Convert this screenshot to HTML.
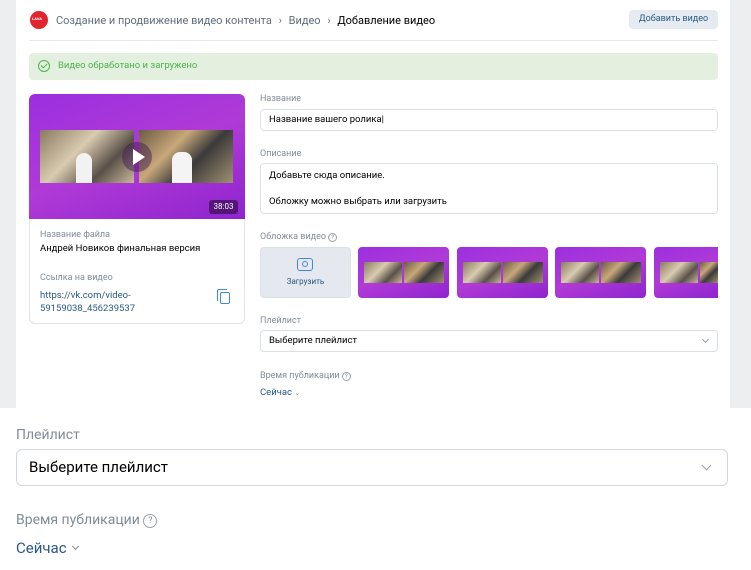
<!DOCTYPE html>
<html><head><meta charset="utf-8"><style>
*{box-sizing:border-box;margin:0;padding:0}
body{width:751px;height:570px;overflow:hidden;background:#fff;font-family:"Roboto","Liberation Sans",sans-serif;position:relative;color:#000}
.a{position:absolute}
.top{left:0;top:0;width:751px;height:408px;background:#edeef0}
.card{left:16px;top:0;width:714px;height:408px;background:#fff;border-radius:0 0 0 0}
.lbl{font-size:9px;color:#818c99}
.inp{border:1px solid #dce1e6;border-radius:4px;background:#fff;font-size:9.5px;color:#000}
.frame{background:linear-gradient(135deg,#8a7a62,#d9cbb0 40%,#5a5048 70%,#c9b89a)}
.frame2{background:linear-gradient(135deg,#6b5a44,#c8a87a 35%,#3b3a3a 60%,#a09070)}
.pur{background:linear-gradient(160deg,#9b2fe0,#b03ad6 50%,#8f24cf)}
</style></head><body>
<div class="a top"></div>
<div class="a card"></div>
<!-- header -->
<div class="a" style="left:30px;top:11px;width:18px;height:18px;border-radius:50%;background:#e1252f"></div>
<div class="a" style="left:32px;top:16px;font-size:4px;color:#fff;font-weight:bold">LAVA</div>
<div class="a" style="left:56px;top:14px;font-size:11px;color:#626d7a;white-space:nowrap">Создание и продвижение видео контента <span style="margin:0 4px">›</span> Видео <span style="margin:0 4px">›</span> <span style="color:#000">Добавление видео</span></div>
<div class="a" style="left:629px;top:10px;width:89px;height:19px;border-radius:4px;background:#e5ebf1;color:#2a5885;font-size:9px;text-align:center;line-height:19px">Добавить видео</div>
<div class="a" style="left:29px;top:40px;width:689px;height:1px;background:#e7e8ec"></div>
<!-- banner -->
<div class="a" style="left:29px;top:53px;width:689px;height:27px;border-radius:4px;background:#e3f0df"></div>
<div class="a" style="left:38px;top:60px;width:12px;height:12px;border:1.3px solid #4bb34b;border-radius:50%"></div>
<div class="a" style="left:42px;top:62px;width:4px;height:6px;border:solid #4bb34b;border-width:0 1.3px 1.3px 0;transform:rotate(45deg)"></div>
<div class="a" style="left:58px;top:60px;font-size:9.5px;color:#4bb34b">Видео обработано и загружено</div>
<!-- left card -->
<div class="a" style="left:29px;top:94px;width:216px;height:230px;border:1px solid #e1e3e6;border-radius:6px"></div>
<div class="a pur" style="left:29px;top:94px;width:216px;height:125px;border-radius:6px 6px 0 0"></div>
<div class="a frame" style="left:40px;top:130px;width:94px;height:53px"></div>
<div class="a frame2" style="left:139px;top:130px;width:94px;height:53px"></div>
<div class="a" style="left:76px;top:153px;width:16px;height:30px;border-radius:8px 8px 0 0;background:#f2f2f2"></div>
<div class="a" style="left:172px;top:152px;width:20px;height:31px;border-radius:8px 8px 0 0;background:#f4f4f4"></div>
<div class="a" style="left:122px;top:142px;width:30px;height:30px;border-radius:50%;background:rgba(60,20,80,.45)"></div>
<div class="a" style="left:133px;top:149px;width:0;height:0;border-left:12px solid #fff;border-top:8px solid transparent;border-bottom:8px solid transparent"></div>
<div class="a" style="left:209px;top:200px;width:29px;height:14px;border-radius:3px;background:rgba(40,10,60,.6);color:#fff;font-size:8px;text-align:center;line-height:14px">38:03</div>
<div class="a lbl" style="left:40px;top:230px">Название файла</div>
<div class="a" style="left:40px;top:243px;font-size:9.5px">Андрей Новиков финальная версия</div>
<div class="a lbl" style="left:40px;top:273px">Ссылка на видео</div>
<div class="a" style="left:40px;top:289px;font-size:9.5px;color:#2a5885;line-height:13px">https://vk.com/video-<br>59159038_456239537</div>
<div class="a" style="left:220px;top:292px;width:10px;height:12px;border:1.5px solid #3f8ae0;border-radius:2px"></div>
<div class="a" style="left:217px;top:289px;width:10px;height:12px;border-left:1.5px solid #3f8ae0;border-top:1.5px solid #3f8ae0;border-radius:2px 0 0 0"></div>
<!-- right column -->
<div class="a lbl" style="left:260px;top:94px">Название</div>
<div class="a inp" style="left:260px;top:109px;width:458px;height:22px;padding:0 8px;line-height:20px">Название вашего ролика|</div>
<div class="a lbl" style="left:260px;top:149px">Описание</div>
<div class="a inp" style="left:260px;top:163px;width:458px;height:51px;padding:5px 8px;line-height:13px">Добавьте сюда описание.<br><br>Обложку можно выбрать или загрузить</div>
<div class="a lbl" style="left:260px;top:232px">Обложка видео <span style="display:inline-block;width:9px;height:9px;border:1px solid #99a2ad;border-radius:50%;font-size:6px;text-align:center;line-height:8px">?</span></div>
<div class="a" style="left:260px;top:247px;width:91px;height:51px;border-radius:4px;background:#e5e9ef;border:1px solid #dce1e6"></div>
<div class="a" style="left:297px;top:258px;width:16px;height:13px;border:1.5px solid #3f8ae0;border-radius:3px"></div>
<div class="a" style="left:302px;top:261px;width:6px;height:6px;border:1.5px solid #3f8ae0;border-radius:50%"></div>
<div class="a" style="left:260px;top:277px;width:91px;text-align:center;font-size:8px;color:#2a5885">Загрузить</div>
<div class="a pur" style="left:358px;top:247px;width:91px;height:51px;border-radius:4px"></div>
<div class="a pur" style="left:457px;top:247px;width:91px;height:51px;border-radius:4px"></div>
<div class="a pur" style="left:555px;top:247px;width:91px;height:51px;border-radius:4px"></div>
<div class="a pur" style="left:654px;top:247px;width:64px;height:51px;border-radius:4px 0 0 4px"></div>
<div class="a frame" style="left:364px;top:262px;width:38px;height:21px"></div><div class="a frame2" style="left:404px;top:262px;width:40px;height:21px"></div>
<div class="a frame" style="left:463px;top:262px;width:38px;height:21px"></div><div class="a frame2" style="left:503px;top:262px;width:40px;height:21px"></div>
<div class="a frame" style="left:561px;top:262px;width:38px;height:21px"></div><div class="a frame2" style="left:601px;top:262px;width:40px;height:21px"></div>
<div class="a frame" style="left:660px;top:262px;width:38px;height:21px"></div><div class="a frame2" style="left:700px;top:262px;width:18px;height:21px"></div>
<div class="a lbl" style="left:260px;top:316px">Плейлист</div>
<div class="a inp" style="left:260px;top:330px;width:458px;height:22px;padding:0 8px;line-height:20px">Выберите плейлист</div>
<div class="a" style="left:703px;top:337px;width:5px;height:5px;border:solid #99a2ad;border-width:0 1px 1px 0;transform:rotate(45deg)"></div>
<div class="a lbl" style="left:260px;top:371px">Время публикации <span style="display:inline-block;width:9px;height:9px;border:1px solid #99a2ad;border-radius:50%;font-size:6px;text-align:center;line-height:8px">?</span></div>
<div class="a" style="left:260px;top:387px;font-size:9.5px;color:#2a5885">Сейчас <span style="font-size:7px;color:#818c99">⌄</span></div>
<!-- zoomed bottom -->
<div class="a" style="left:0;top:408px;width:751px;height:162px;background:#fff"></div>
<div class="a" style="left:16px;top:427px;font-size:14px;color:#818c99">Плейлист</div>
<div class="a" style="left:16px;top:449px;width:712px;height:37px;border:1px solid #d3d9de;border-radius:6px;padding:0 12px;font-size:15px;line-height:35px">Выберите плейлист</div>
<div class="a" style="left:703px;top:462px;width:7px;height:7px;border:solid #99a2ad;border-width:0 1.3px 1.3px 0;transform:rotate(45deg)"></div>
<div class="a" style="left:16px;top:512px;font-size:14px;color:#818c99">Время публикации <span style="display:inline-block;width:14px;height:14px;border:1.3px solid #99a2ad;border-radius:50%;font-size:9px;text-align:center;line-height:12px;vertical-align:1px">?</span></div>
<div class="a" style="left:16px;top:539px;font-size:15px;color:#2a5885">Сейчас</div>
<div class="a" style="left:73px;top:544px;width:5px;height:5px;border:solid #818c99;border-width:0 1.2px 1.2px 0;transform:rotate(45deg)"></div>
</body></html>
